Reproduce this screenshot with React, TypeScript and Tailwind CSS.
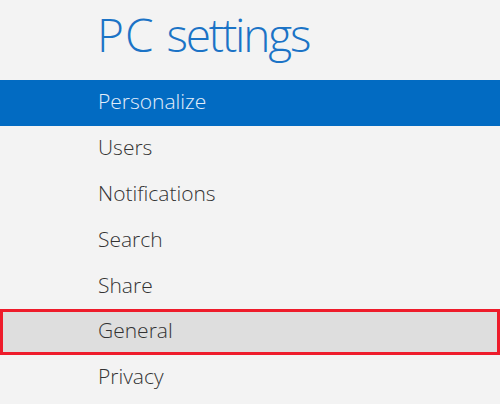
import React from "react";

const items = ["Users", "Notifications", "Search", "Share"];

const row =
  "h-[46px] pl-[98px] pb-[3px] flex items-center text-[21px] font-[350] tracking-[0px]";

export default function App() {
  return (
    <div
      className="w-[500px] h-[404px] overflow-hidden bg-[#f3f3f3]"
      style={{ fontFamily: '"Open Sans", "Noto Sans", sans-serif' }}
    >
      <div className="h-[80px] pl-[97px] pt-[4px]">
        <h1 className="text-[46px] leading-[60px] font-light text-[#1b73c6]">
          <span className="tracking-[1px]">PC</span>{" "}
          <span className="tracking-[-2.2px]">settings</span>
        </h1>
      </div>
      <div className="flex flex-col">
        <div className={`${row} bg-[#026bc2] text-[#e3eefa]`}>Personalize</div>
        {items.map((t) => (
          <div key={t} className={`${row} text-[#333333]`}>
            {t}
          </div>
        ))}
        <div className="h-[46px] -mt-px border-[3px] border-[#ee1c2b] bg-[#dedede] pl-[95px] pb-[2px] flex items-center text-[21px] font-[350] tracking-[0px] text-[#333333]">
          General
        </div>
        <div className={`${row} text-[#333333]`}>Privacy</div>
      </div>
    </div>
  );
}
